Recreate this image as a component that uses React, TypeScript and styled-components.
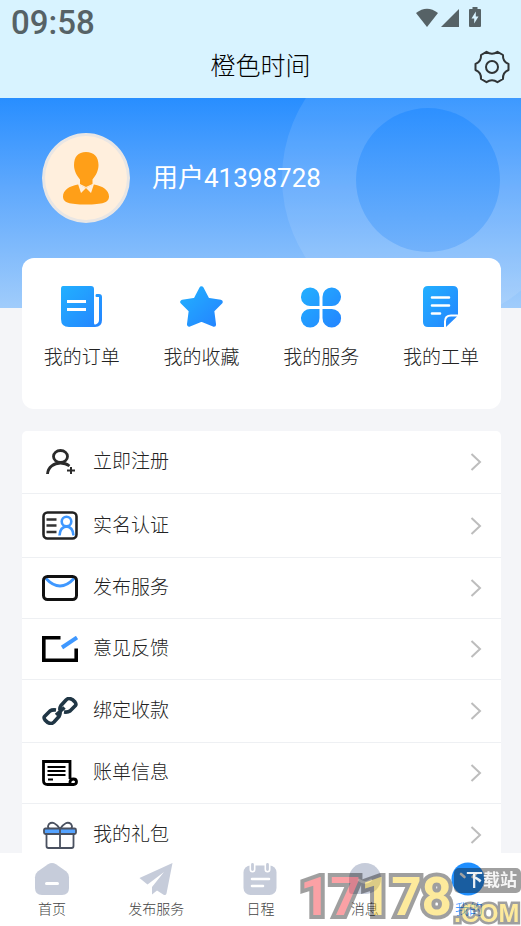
import React from "react";
import styled, { createGlobalStyle } from "styled-components";

const latinFirst = `Roboto, "Noto Sans CJK SC", sans-serif`;

const GlobalStyle = createGlobalStyle`
  *, *::before, *::after { box-sizing: border-box; }
  body { margin: 0; background: #f4f5f8; font-family: ${latinFirst}; font-weight: 300; color: #222; }
  button { font: inherit; color: inherit; background: none; border: 0; padding: 0; margin: 0; cursor: pointer; }
  a { color: inherit; text-decoration: none; }
  ul { list-style: none; margin: 0; padding: 0; }
  h1, p { margin: 0; font-weight: 400; }
  svg { display: block; flex: none; }
`;

const Screen = styled.div`
  display: flex;
  flex-direction: column;
  height: 100vh;
  overflow: hidden;
`;

const TopBar = styled.header`
  flex: none;
  background: #d8f3ff;
`;

const StatusBar = styled.div`
  display: flex;
  justify-content: space-between;
  align-items: flex-start;
  padding: 5px 40px 0 11px;
  color: #566266;
`;

const Clock = styled.time`
  font-size: 33px;
  font-weight: 500;
  line-height: 36px;
`;

const StatusIcons = styled.div`
  display: flex;
  align-items: flex-end;
  padding-top: 2px;
  gap: 3px;
`;

const BatterySlot = styled.span`
  padding-left: 7px;
`;

const TitleBar = styled.div`
  display: grid;
  grid-template-columns: 1fr auto 1fr;
  align-items: center;
  padding: 8px 11px 13px;
`;

const Title = styled.h1`
  grid-column: 2;
  font-size: 25px;
  font-weight: 300;
  line-height: 36px;
  color: #000;
`;

const SettingsButton = styled.button`
  justify-self: end;
`;

const Content = styled.main`
  flex: 1;
  min-height: 0;
  overflow-y: auto;
  scrollbar-width: none;
`;

const Hero = styled.section`
  position: relative;
  overflow: hidden;
  padding: 35px 42px 85px;
  background: linear-gradient(#288eff, #5ea8fd 42%, #a0ccfb);
`;

const HeroRing = styled.span`
  position: absolute;
  top: -66px;
  right: -53px;
  width: 292px;
  height: 292px;
  border-radius: 50%;
  background: rgba(255, 255, 255, 0.1);
`;

const HeroDisc = styled.span`
  position: absolute;
  top: 10px;
  right: 21px;
  width: 144px;
  height: 144px;
  border-radius: 50%;
  background: linear-gradient(#2d90ff, #72b2fb);
`;

const Profile = styled.div`
  position: relative;
  display: flex;
  align-items: center;
  gap: 22px;
`;

const Avatar = styled.span`
  width: 88px;
  height: 90px;
  border: 3px solid #e9e6e4;
  border-radius: 50%;
  background: #ffefdd;
  display: grid;
  place-items: center;
`;

const UserName = styled.p`
  font-size: 26px;
  line-height: 36px;
  color: #fff;
`;

const Body = styled.div`
  position: relative;
  display: grid;
  gap: 22px;
  margin-top: -50px;
  padding: 0 20px 0 22px;
`;

const QuickCard = styled.nav`
  display: grid;
  grid-template-columns: repeat(4, 1fr);
  padding: 28px 0 37px;
  background: #fff;
  border-radius: 12px;
`;

const QuickLink = styled.a`
  display: flex;
  flex-direction: column;
  align-items: center;
  gap: 16px;
  font-size: 19px;
  line-height: 28px;
`;

const Menu = styled.ul`
  background: #fff;
  border-radius: 5px;
`;

const MenuItem = styled.li`
  & + & { border-top: 1px solid #eef0f3; }
`;

const MenuLink = styled.a`
  display: flex;
  align-items: center;
  gap: 15px;
  padding: 17px 19px 17px 20px;
`;

const MenuLabel = styled.span`
  flex: 1;
  font-size: 19px;
  line-height: 26px;
`;

const TabBar = styled.nav`
  flex: none;
  display: grid;
  grid-template-columns: repeat(5, 1fr);
  padding: 9px 0 6px;
  background: #fff;
`;

const Tab = styled.button<{ $active?: boolean }>`
  display: flex;
  flex-direction: column;
  align-items: center;
  gap: 2px;
  font-size: 14px;
  line-height: 22px;
  color: ${(p) => (p.$active ? "#1a8aff" : "#444")};
`;

const Watermark = styled.div`
  position: fixed;
  right: 0;
  bottom: 0;
  display: flex;
  align-items: flex-end;
  gap: 2px;
  pointer-events: none;
`;

const markLetters = `
  font-weight: 700;
  paint-order: stroke fill;
  color: #fbca08;
  opacity: 0.4;
`;

const MarkNumber = styled.span`
  ${markLetters}
  font-family: Roboto, sans-serif;
  font-size: 53px;
  line-height: 58px;
  -webkit-text-stroke: 8px #111;
`;

const MarkRed = styled.span`
  color: #f5161f;
`;

const MarkSide = styled.span`
  display: flex;
  flex-direction: column;
  gap: 7px;
`;

const MarkBadge = styled.span`
  padding: 0 4px 0 12px;
  border-radius: 5px;
  background: rgba(17, 17, 17, 0.4);
  color: rgba(255, 255, 255, 0.9);
  font-size: 17px;
  font-weight: 700;
  line-height: 25px;
`;

const MarkDomain = styled.span`
  ${markLetters}
  font-family: "Liberation Sans", sans-serif;
  font-size: 25px;
  line-height: 26px;
  -webkit-text-stroke: 5px #111;
`;

const BlueGradient = ({ id }: { id: string }) => (
  <defs>
    <linearGradient id={id} x1="0" y1="0" x2="1" y2="1">
      <stop offset="0" stopColor="#22b0ff" />
      <stop offset="1" stopColor="#2484ff" />
    </linearGradient>
  </defs>
);

const OrdersIcon = () => (
  <svg width="44" height="42" viewBox="0 0 44 42">
    <BlueGradient id="orders" />
    <path fill="url(#orders)" d="M3 0h28q3 0 3 3v34q0 2 1.500 1.500Q39 37 39 34V11h-2.500q-1 0-1-1.300T36.500 8H39q3 0 3 3v23q0 7-7 7H9Q1 41 1 33V3q0-3 2-3z" />
    <path stroke="#fff" strokeWidth="3" d="M7 15.500h19M7 23.500h19" />
  </svg>
);

const StarIcon = () => (
  <svg width="46" height="42" viewBox="0 0 46 42">
    <BlueGradient id="star" />
    <path fill="url(#star)" stroke="url(#star)" strokeWidth="4.500" strokeLinejoin="round" d="M22.500 2.500l6 11.500L41.500 16l-8.500 8.500 1.800 14L22.500 33.500 10.200 38.500l1.800-14L3.500 16l13-2z" />
  </svg>
);

const ServiceIcon = () => (
  <svg width="42" height="42" viewBox="0 0 42 42">
    <BlueGradient id="service" />
    <path fill="url(#service)" d="M19.500 20H11A9.300 9.300 0 1 1 19.500 11zM22.500 20V11A9.300 9.300 0 1 1 31.500 20zM19.500 23v9A9.300 9.300 0 1 1 11 23zM22.500 23h9A9.300 9.300 0 1 1 22.500 32z" />
  </svg>
);

const TicketIcon = () => (
  <svg width="38" height="42" viewBox="0 0 38 42">
    <BlueGradient id="ticket" />
    <path fill="url(#ticket)" d="M6 0h25q5 0 5 5v23.500h-7q-7 0-7 7V41H6q-5 0-5-5V5q0-5 5-5zM24 41v-5.500q0-5 5-5h6z" />
    <path stroke="#fff" strokeWidth="2.600" strokeLinecap="round" d="M10 11.500h17M10 19.500h17M10 27.500h8" />
  </svg>
);

const RegisterIcon = () => (
  <svg width="36" height="28" viewBox="0 0 36 28" fill="none" stroke="#2b2b2b" strokeWidth="2.800">
    <ellipse cx="18.500" cy="8.500" rx="7" ry="6" />
    <path d="M5.500 26C6 19 12 15 18.500 15q5 0 9 3" />
    <path strokeWidth="2" d="M25 22.500h8M29 19v7" />
  </svg>
);

const IdCardIcon = () => (
  <svg width="36" height="29" viewBox="0 0 36 29" fill="none">
    <rect x="1.500" y="1.500" width="33" height="26" rx="4" stroke="#222" strokeWidth="2.600" />
    <path stroke="#333" strokeWidth="2.400" d="M4.500 8.500h10M4.500 14.500h10M4.500 21h10" />
    <path stroke="#3f98ff" strokeWidth="2.600" d="M17.500 24.500q.5-8.500 7-9 6.500.5 7 9" />
    <circle cx="24.500" cy="10.500" r="4.800" stroke="#3f98ff" strokeWidth="2.600" />
  </svg>
);

const MailIcon = () => (
  <svg width="36" height="26" viewBox="0 0 36 26" fill="none">
    <path stroke="#3f98ff" strokeWidth="3" d="M4 3.500q14 15 28 0" />
    <rect x="1.500" y="1.500" width="33" height="23" rx="4" stroke="#111" strokeWidth="3" />
  </svg>
);

const FeedbackIcon = () => (
  <svg width="36" height="26" viewBox="0 0 36 26" fill="none">
    <path stroke="#000" strokeWidth="3.600" d="M18.500 1.800H1.800v22.400h32.400V12.500" />
    <path stroke="#3f98ff" strokeWidth="4" d="M20 11.500L35 1.500" />
  </svg>
);

const LinkIcon = () => (
  <svg width="36" height="28" viewBox="0 0 36 28" fill="none" stroke="#203645" strokeWidth="3.600" strokeLinejoin="round">
    <path d="M14 13q-4-.500-6 1L2.500 19.500Q1.500 21 3 23q3 3.500 6 3.500 1.500 0 3-1.500l5-5.500q1.500-2.500 1-4.500" />
    <path d="M22 15q4 .500 6-1l5.500-5.500Q34.500 7 33 5q-3-3.500-6-3.500-1.500 0-3 1.500l-5 5.500q-1.500 2.500-1 4.500" />
    <path d="M14 18L22.500 10.500" />
  </svg>
);

const BillIcon = () => (
  <svg width="36" height="26" viewBox="0 0 36 26" fill="none" stroke="#000">
    <path strokeWidth="2.800" d="M28 19V1.500H1.500v19q0 4 4 4h26q3 0 3-2.700t-3-2.800-3.500 2.800v2.500" />
    <path strokeWidth="2" d="M5.500 7h18M5.500 11h18M5.500 15h18M6 19.500h5" />
  </svg>
);

const GiftIcon = () => (
  <svg width="36" height="28" viewBox="0 0 36 28" fill="none" stroke="#4a5160" strokeWidth="1.800">
    <path d="M4.500 13v12q0 2 2 2h23q2 0 2-2V13M18 8v19" />
    <rect x="2" y="7.500" width="32" height="5.500" rx="1.500" fill="#55a3ff" />
    <path d="M18 8Q12-1 7 3q-2 3 0 4.500M18 8q6-9 11-5 2 3 0 4.500M18 8v5" />
  </svg>
);

const Chevron = () => (
  <svg width="12" height="18" viewBox="0 0 12 18" fill="none" stroke="#bdbdbd" strokeWidth="2">
    <path d="M1.500 1L10 9l-8.500 8" />
  </svg>
);

const GearIcon = () => (
  <svg width="36" height="34" viewBox="0 0 36 34" fill="none" stroke="#303436" strokeWidth="2">
    <path strokeLinejoin="round" d="M12.500 1.800Q18 5.500 23.500 1.800L29 5q-.500 6.500 5.500 9v6Q28.500 22.500 29 29l-5.500 3.200Q18 28.500 12.500 32.200L7 29Q7.500 22.500 1.500 20v-6Q7.500 11.500 7 5z" />
    <circle cx="18" cy="17" r="6" />
  </svg>
);

const AvatarIcon = () => (
  <svg width="48" height="54" viewBox="0 0 48 54">
    <g fill="#ff9f18">
      <path d="M24 1c8 0 12.500 5 12.500 13 0 6-3 11-6 14.500V33L24 36l-6-3v-4.500C15 25 12 20 12 14 12 6 16 1 24 1z" />
      <path d="M16 33.500l8 3.500 8-3.500c9 1.500 15 6 15 12 0 6-6 8-23 8s-23-2-23-8c0-6 6-10.500 15-12z" />
    </g>
    <path fill="#ffefdd" d="M16 33l8 4-5 5zM32 33l-8 4 5 5z" />
  </svg>
);

const HomeIcon = () => (
  <svg width="36" height="34" viewBox="0 0 36 34">
    <path fill="#c6ccda" d="M14 2.200q4-2.500 8 0l10 7q3 2.300 3 6V26q0 7-7 7H8q-7 0-7-7V15.200q0-3.700 3-6z" />
    <path stroke="#fff" strokeWidth="3" strokeLinecap="round" d="M12.500 21.500h11" />
  </svg>
);

const PlaneIcon = () => (
  <svg width="36" height="34" viewBox="0 0 36 34" fill="#c6ccda">
    <path d="M34.500 1L1.500 16l8 6.500L26 10 14 25v7.500l5-4 7 4.500q2 .5 2.500-1.500z" />
  </svg>
);

const CalendarIcon = () => (
  <svg width="36" height="34" viewBox="0 0 36 34">
    <rect x="1.500" y="3.500" width="33" height="29.500" rx="7" fill="#c6ccda" />
    <path stroke="#fff" strokeWidth="6" strokeLinecap="round" d="M10.500 1v6.500M25.500 1v6.500" />
    <path stroke="#c6ccda" strokeWidth="2.800" strokeLinecap="round" d="M10.500 2.500v5M25.500 2.500v5" />
    <path stroke="#fff" strokeWidth="2.600" strokeLinecap="round" d="M10 17h17M10 24h11" />
  </svg>
);

const ChatIcon = () => (
  <svg width="36" height="34" viewBox="0 0 36 34">
    <path fill="#c6ccda" d="M18 1c9 0 16 6.500 16 15.500S27 32 18 32H5q-3 0-3-3V16.500C2 7.500 9 1 18 1z" />
    <path fill="none" stroke="#fff" strokeWidth="2.600" strokeLinecap="round" d="M12 18q6 5 12 0" />
  </svg>
);

const MeIcon = () => (
  <svg width="36" height="34" viewBox="0 0 36 34">
    <circle cx="17" cy="17" r="16.500" fill="#1f8fff" />
    <path fill="none" stroke="#fff" strokeWidth="2.600" strokeLinecap="round" d="M10 12l3.500 3M25 12l-3.500 3" />
  </svg>
);

const WifiIcon = () => (
  <svg width="22" height="19" viewBox="0 0 22 19" fill="currentColor">
    <path d="M0 5Q11-3.500 22 5L11 19z" />
  </svg>
);

const SignalIcon = () => (
  <svg width="18" height="18" viewBox="0 0 18 18" fill="currentColor">
    <path d="M18 0v18H0z" />
  </svg>
);

const BatteryIcon = () => (
  <svg width="12" height="20" viewBox="0 0 12 20">
    <path fill="currentColor" d="M3.500 0h5v2H11q1 0 1 1v16q0 1-1 1H1q-1 0-1-1V3q0-1 1-1h2.500z" />
    <path fill="#d8f3ff" d="M6.800 4.500L2.500 11.500h2.700v5L9.500 9.500H6.800z" />
  </svg>
);

const quickLinks = [
  { label: "我的订单", Icon: OrdersIcon },
  { label: "我的收藏", Icon: StarIcon },
  { label: "我的服务", Icon: ServiceIcon },
  { label: "我的工单", Icon: TicketIcon },
];

const menuItems = [
  { label: "立即注册", Icon: RegisterIcon },
  { label: "实名认证", Icon: IdCardIcon },
  { label: "发布服务", Icon: MailIcon },
  { label: "意见反馈", Icon: FeedbackIcon },
  { label: "绑定收款", Icon: LinkIcon },
  { label: "账单信息", Icon: BillIcon },
  { label: "我的礼包", Icon: GiftIcon },
];

const tabs = [
  { label: "首页", Icon: HomeIcon },
  { label: "发布服务", Icon: PlaneIcon },
  { label: "日程", Icon: CalendarIcon },
  { label: "消息", Icon: ChatIcon },
  { label: "我的", Icon: MeIcon, active: true },
];

export default function App() {
  return (
    <>
      <GlobalStyle />
      <Screen>
        <TopBar>
          <StatusBar>
            <Clock>09:58</Clock>
            <StatusIcons>
              <WifiIcon />
              <SignalIcon />
              <BatterySlot>
                <BatteryIcon />
              </BatterySlot>
            </StatusIcons>
          </StatusBar>
          <TitleBar>
            <Title>橙色时间</Title>
            <SettingsButton type="button" aria-label="设置">
              <GearIcon />
            </SettingsButton>
          </TitleBar>
        </TopBar>

        <Content>
          <Hero>
            <HeroRing />
            <HeroDisc />
            <Profile>
              <Avatar>
                <AvatarIcon />
              </Avatar>
              <UserName>用户41398728</UserName>
            </Profile>
          </Hero>
          <Body>
            <QuickCard>
              {quickLinks.map(({ label, Icon }) => (
                <QuickLink key={label} href="#">
                  <Icon />
                  {label}
                </QuickLink>
              ))}
            </QuickCard>
            <Menu>
              {menuItems.map(({ label, Icon }) => (
                <MenuItem key={label}>
                  <MenuLink href="#">
                    <Icon />
                    <MenuLabel>{label}</MenuLabel>
                    <Chevron />
                  </MenuLink>
                </MenuItem>
              ))}
            </Menu>
          </Body>
        </Content>

        <TabBar>
          {tabs.map(({ label, Icon, active }) => (
            <Tab key={label} type="button" $active={active} aria-current={active ? "page" : undefined}>
              <Icon />
              {label}
            </Tab>
          ))}
        </TabBar>
      </Screen>

      <Watermark>
        <MarkNumber>
          <MarkRed>17</MarkRed>178
        </MarkNumber>
        <MarkSide>
          <MarkBadge>下载站</MarkBadge>
          <MarkDomain>.COM</MarkDomain>
        </MarkSide>
      </Watermark>
    </>
  );
}
